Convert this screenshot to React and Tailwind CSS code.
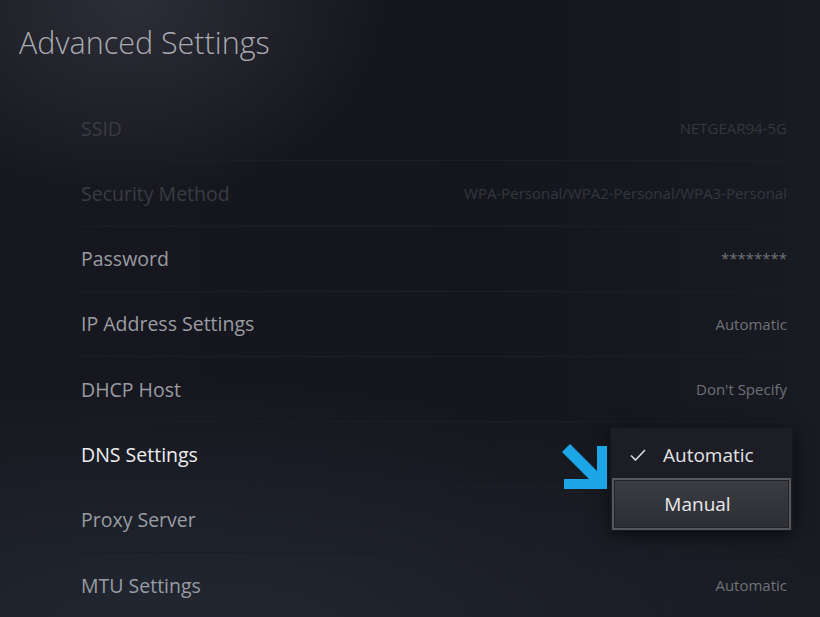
import React from 'react';

const rows = [
  { label: 'SSID', value: 'NETGEAR94-5G', dim: true },
  { label: 'Security Method', value: 'WPA-Personal/WPA2-Personal/WPA3-Personal', dim: true },
  { label: 'Password', value: '********' },
  { label: 'IP Address Settings', value: 'Automatic' },
  { label: 'DHCP Host', value: "Don't Specify" },
  { label: 'DNS Settings', value: '', active: true },
  { label: 'Proxy Server', value: '' },
  { label: 'MTU Settings', value: 'Automatic' },
];

// blue pointer arrow, pointing down-right
const Arrow = () => (
  <svg width="48" height="48" viewBox="0 0 48 48" className="absolute left-[-49px] top-[15px]">
    <polygon points="45,3 45,46 2,46 2,36 27,36 0,9 8,1 35,28 35,3" fill="#1ca6e8" />
  </svg>
);

const DnsMenu = () => (
  <div className="absolute left-[529px] top-[5px] w-[183px] h-[104px] bg-[#1d1e25] border border-[#17181d] shadow-[0_4px_16px_rgba(0,0,0,0.6)]">
    <Arrow />
    <div className="h-[50px] pt-[4px] flex items-center pl-[19px] text-[19px] text-[#e2e3e6]">
      <svg width="16" height="12" viewBox="0 0 16 12" className="mr-[17px]">
        <path d="M1 6.5 L5.5 11 L15 1" fill="none" stroke="#dcdde0" strokeWidth="1.6" />
      </svg>
      Automatic
    </div>
    <div className="mx-[1px] h-[52px] flex items-center justify-center border-2 border-[#55575d] bg-gradient-to-b from-[#3b3d43] to-[#2c2e33] text-[19px] text-[#e8e9ec] shadow-[inset_0_0_0_1px_#222]">
      <span className="pr-[8px]">Manual</span>
    </div>
  </div>
);

export default function App() {
  return (
    <div
      className="w-[820px] h-[617px] overflow-hidden bg-[#15161d] bg-[radial-gradient(ellipse_260px_200px_at_130px_0px,#2c2d36_0%,rgba(44,45,54,0)_100%),radial-gradient(ellipse_700px_260px_at_200px_640px,#222833_0%,rgba(34,40,51,0)_100%),linear-gradient(90deg,#17181f_0%,#15161d_60%,#191b22_100%)]"
      style={{ fontFamily: '"Open Sans", "Noto Sans", sans-serif' }}
    >
      <div className="pl-[19px] pt-[21px] h-[96px]">
        <h1 className="text-[30.5px] font-light leading-[42px] text-[#a9abb1]">Advanced Settings</h1>
      </div>
      <div className="pl-[81px] pr-[33px]">
        {rows.map((r, i) => (
          <div
            key={r.label}
            className={`relative h-[65.3px] flex items-center justify-between ${i < rows.length - 1 ? 'border-b border-[#1c1e25]' : ''}`}
          >
            <span
              className={`text-[19.5px] ${r.active ? 'text-[#eeeef0]' : r.dim ? 'text-[#393b43]' : 'text-[#9a9ca2]'}`}
            >
              {r.label}
            </span>
            <span className={`text-[15px] ${r.dim ? 'text-[#34363e]' : 'text-[#6f7178]'}`}>{r.value}</span>
            {r.active && <DnsMenu />}
          </div>
        ))}
      </div>
    </div>
  );
}
